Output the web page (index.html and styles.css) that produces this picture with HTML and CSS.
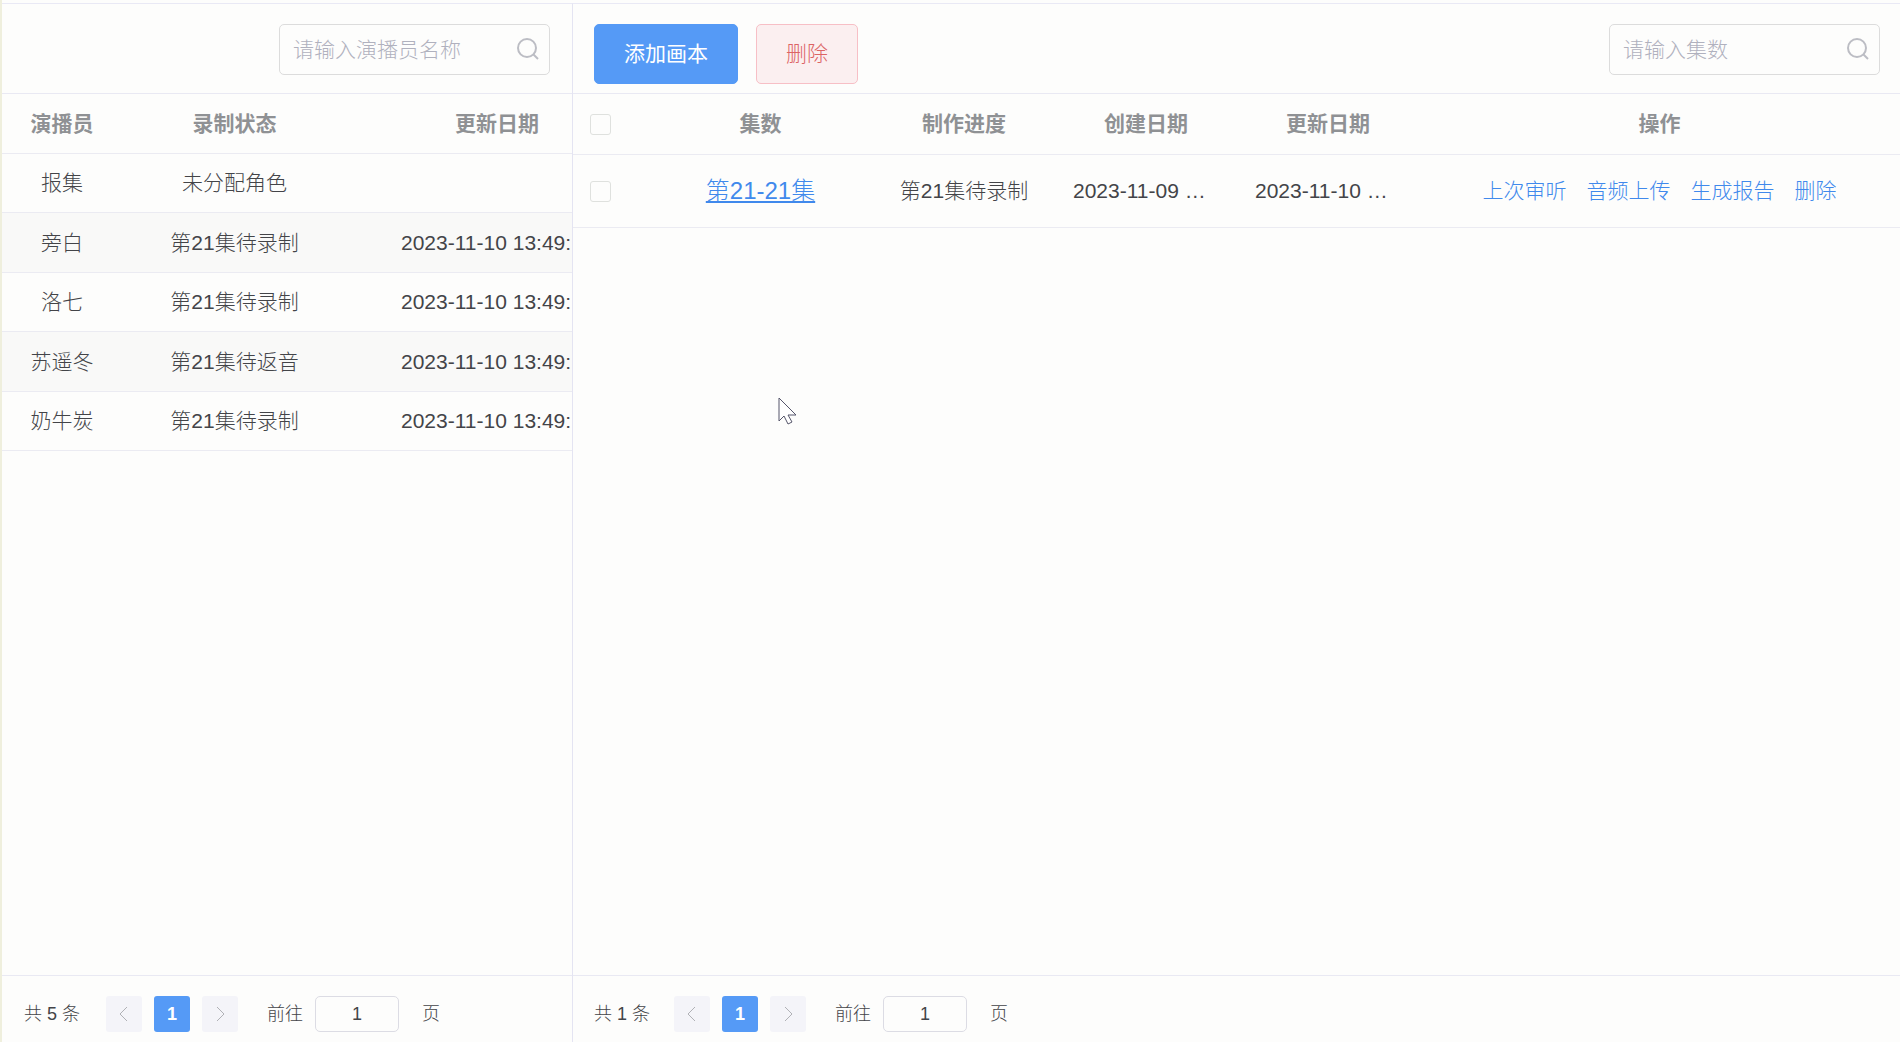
FILE: index.html
```html
<!DOCTYPE html>
<html lang="zh-CN">
<head>
<meta charset="utf-8">
<title>画本管理</title>
<link rel="stylesheet" href="styles.css">
</head>
<body>
<div class="app">
  <section class="panel panel-cast">
    <header class="toolbar">
      <label class="search">
        <input type="text" placeholder="请输入演播员名称" aria-label="演播员名称">
        <svg class="search-icon" viewBox="0 0 22 22" aria-hidden="true"><circle cx="10" cy="10" r="9"/><path d="M16.5 16.5L21 21"/></svg>
      </label>
    </header>
    <div class="table-area">
      <table class="cast-table">
        <colgroup><col class="c-name"><col class="c-status"><col class="c-time"></colgroup>
        <thead><tr><th>演播员</th><th>录制状态</th><th>更新日期</th></tr></thead>
        <tbody>
          <tr><td>报集</td><td>未分配角色</td><td class="time"></td></tr>
          <tr><td>旁白</td><td>第21集待录制</td><td class="time">2023-11-10 13:49:</td></tr>
          <tr><td>洛七</td><td>第21集待录制</td><td class="time">2023-11-10 13:49:</td></tr>
          <tr><td>苏遥冬</td><td>第21集待返音</td><td class="time">2023-11-10 13:49:</td></tr>
          <tr><td>奶牛炭</td><td>第21集待录制</td><td class="time">2023-11-10 13:49:</td></tr>
        </tbody>
      </table>
    </div>
    <footer class="pager">
      <span class="total">共 5 条</span>
      <button class="page-btn" disabled aria-label="上一页"><svg viewBox="0 0 10 16"><path d="M8 1L1 8l7 7"/></svg></button>
      <button class="page-btn active">1</button>
      <button class="page-btn" disabled aria-label="下一页"><svg viewBox="0 0 10 16"><path d="M2 1l7 7-7 7"/></svg></button>
      <label class="jump" for="cast-page">前往</label>
      <input class="page-input" id="cast-page" type="text" value="1">
      <span class="unit">页</span>
    </footer>
  </section>

  <section class="panel panel-episodes">
    <header class="toolbar">
      <button class="btn btn-primary">添加画本</button>
      <button class="btn btn-danger">删除</button>
      <label class="search">
        <input type="text" placeholder="请输入集数" aria-label="集数">
        <svg class="search-icon" viewBox="0 0 22 22" aria-hidden="true"><circle cx="10" cy="10" r="9"/><path d="M16.5 16.5L21 21"/></svg>
      </label>
    </header>
    <div class="table-area">
      <table class="episode-table">
        <colgroup><col class="c-check"><col class="c-episode"><col class="c-date"><col class="c-date"><col class="c-date"><col></colgroup>
        <thead><tr>
          <th class="check"><input type="checkbox" aria-label="全选"></th>
          <th>集数</th><th>制作进度</th><th>创建日期</th><th>更新日期</th><th>操作</th>
        </tr></thead>
        <tbody><tr>
          <td class="check"><input type="checkbox" aria-label="选择第21-21集"></td>
          <td><a class="episode" href="#">第21-21集</a></td>
          <td>第21集待录制</td>
          <td class="date">2023-11-09 …</td>
          <td class="date">2023-11-10 …</td>
          <td><div class="ops"><a href="#">上次审听</a><a href="#">音频上传</a><a href="#">生成报告</a><a href="#">删除</a></div></td>
        </tr></tbody>
      </table>
    </div>
    <footer class="pager">
      <span class="total">共 1 条</span>
      <button class="page-btn" disabled aria-label="上一页"><svg viewBox="0 0 10 16"><path d="M8 1L1 8l7 7"/></svg></button>
      <button class="page-btn active">1</button>
      <button class="page-btn" disabled aria-label="下一页"><svg viewBox="0 0 10 16"><path d="M2 1l7 7-7 7"/></svg></button>
      <label class="jump" for="episode-page">前往</label>
      <input class="page-input" id="episode-page" type="text" value="1">
      <span class="unit">页</span>
    </footer>
  </section>
</div>
<svg class="cursor" viewBox="0 0 20 28" aria-hidden="true"><path d="M1 1v23l5-5 4 8 4-2-4-7h8z"/></svg>
</body>
</html>
```

FILE: styles.css
```css
* { box-sizing: border-box; }

body {
  margin: 0;
  background: #fdfdfc;
  color: #434448;
  font-family: "Liberation Sans", "Noto Sans CJK SC", sans-serif;
  font-size: 21px;
  font-weight: 300;
  line-height: 28px;
}

input, button { font: inherit; color: inherit; }
a { color: #4089ec; text-decoration: none; }

.app {
  display: flex;
  min-height: 100vh;
  padding-top: 3px;
  border-left: 2px solid #efefdd;
}

.panel {
  display: flex;
  flex-direction: column;
  border-top: 1px solid #e9e9f5;
}
.panel-cast {
  flex: 0 0 571px;
  min-width: 0;
  border-right: 1px solid #e4e4f2;
}
.panel-episodes { flex: 1; min-width: 0; }

.toolbar {
  display: flex;
  align-items: flex-start;
  gap: 18px;
  height: 90px;
  padding: 20px 20px 0 21px;
  border-bottom: 1px solid #e9e9f3;
}

.btn {
  height: 60px;
  padding: 0 29px;
  border: 1px solid #559af6;
  border-radius: 5px;
}
.btn-primary { background: #559af6; color: #fff; font-weight: 400; }
.btn-danger { background: #fbeff0; border-color: #f7bfc6; color: #dc6464; }

.search { position: relative; width: 271px; margin-left: auto; }
.panel-cast .toolbar { padding-right: 22px; }
.search input {
  display: block;
  width: 100%;
  height: 51px;
  padding: 0 46px 0 13px;
  border: 1px solid #dcdcdc;
  border-radius: 5px;
  background: transparent;
}
.search input::placeholder { color: #b0b1be; opacity: 1; }
.search-icon {
  position: absolute;
  right: 11px;
  top: 14px;
  width: 22px;
  height: 22px;
  fill: none;
  stroke: #bcbdc4;
  stroke-width: 2;
}

.table-area { flex: 1; overflow: hidden; }
table { table-layout: fixed; border-collapse: separate; border-spacing: 0; }
th, td {
  padding: 0;
  border-bottom: 1px solid #ebebf2;
  text-align: center;
  white-space: nowrap;
}
th { color: #8f9194; font-weight: 700; }

.cast-table { width: 645px; }
.c-name { width: 120px; }
.c-status { width: 225px; }
.c-time { width: 300px; }
.cast-table th { height: 60px; }
.cast-table td { height: 59px; }
.cast-table tr:nth-child(even) td { height: 60px; background: #f9f9f8; }
.cast-table .time { padding-left: 54px; text-align: left; }

.episode-table { width: 100%; }
.c-check { width: 75px; }
.c-episode { width: 225px; }
.c-date { width: 182px; }
.episode-table th { height: 61px; }
.episode-table td { height: 73px; }
.episode-table .check { padding-left: 17px; text-align: left; }
.episode-table .date { padding-left: 18px; text-align: left; }
.episode { font-size: 24px; text-decoration: underline; }
.ops { display: flex; justify-content: center; gap: 20px; }

input[type="checkbox"] {
  appearance: none;
  display: block;
  width: 21px;
  height: 21px;
  margin: 0;
  border: 1px solid #dfe1de;
  border-radius: 3px;
}

.pager {
  display: flex;
  align-items: center;
  height: 67px;
  padding: 10px 22px 0;
  border-top: 1px solid #e9e9f3;
  font-size: 18px;
}
.total { width: 82px; }
.panel-episodes .pager { padding-left: 21px; }
.panel-episodes .total { width: 80px; }
.page-btn {
  display: flex;
  align-items: center;
  justify-content: center;
  width: 36px;
  height: 36px;
  margin-right: 12px;
  padding: 0;
  border: 0;
  border-radius: 3px;
  background: #f4f4f9;
}
.page-btn svg { width: 10px; height: 16px; fill: none; stroke: #b0b1b6; stroke-width: 1; }
.page-btn.active { background: #559af6; color: #fff; font-weight: 700; }
.jump { margin: 0 12px 0 17px; }
.page-input {
  width: 84px;
  height: 36px;
  padding: 0;
  border: 1px solid #dcdce4;
  border-radius: 5px;
  background: transparent;
  text-align: center;
}
.unit { margin-left: 23px; }

.cursor {
  position: absolute;
  left: 778px;
  top: 397px;
  width: 20px;
  height: 28px;
  fill: #fff;
  stroke: #55556a;
  stroke-width: 1;
}
```
